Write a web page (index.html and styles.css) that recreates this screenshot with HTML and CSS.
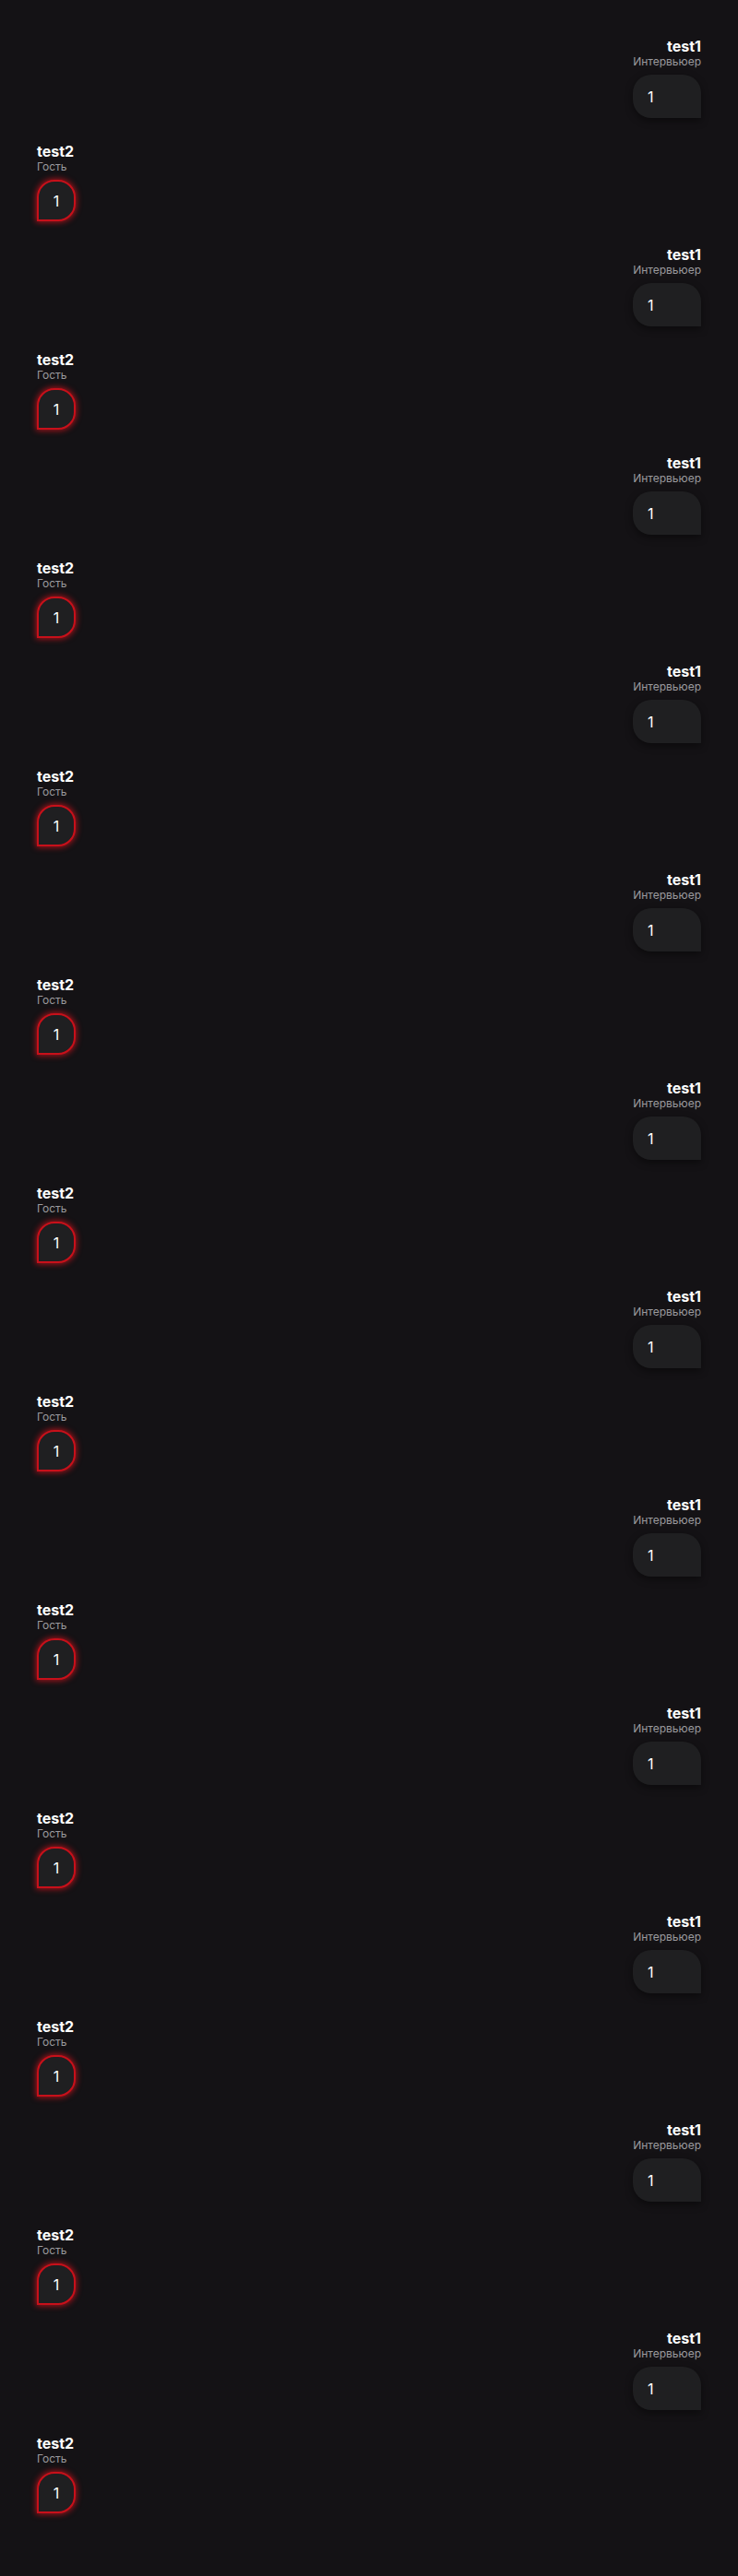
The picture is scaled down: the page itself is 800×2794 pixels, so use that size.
FILE: index.html
```html
<!DOCTYPE html>
<html lang="ru">
<head>
  <meta charset="UTF-8" />
  <meta name="viewport" content="width=device-width, initial-scale=1.0"/>
  <title>Chat</title>
  <link rel="stylesheet" href="styles.css">
</head>
<body>
  <div class="chat" id="chat"></div>

  <script>
    const chat = document.getElementById("chat");

    // 12 pairs of messages: interviewer on the right, guest on the left
    for (let i = 0; i < 12; i++) {
      chat.innerHTML += `
        <div class="message own">
          <div class="name">test1</div>
          <div class="role">Интервьюер</div>
          <div class="bubble">1</div>
        </div>
        <div class="message guest">
          <div class="name">test2</div>
          <div class="role">Гость</div>
          <div class="bubble">1</div>
        </div>
      `;
    }
  </script>
</body>
</html>
```

FILE: styles.css
```css
body {
  font-family: Inter, "Noto Sans", sans-serif;
  background: #141215;
  color: #fff;
  margin: 0;
  padding: 0;
}

.chat {
  padding: 41px 40px 40px;
  display: flex;
  flex-direction: column;
}

.message {
  display: flex;
  flex-direction: column;
  align-items: flex-start;
  margin-bottom: 27px;
}

.message.own {
  align-items: flex-end;
}

.name {
  font-size: 16px;
  font-weight: 700;
  line-height: 18px;
}

.role {
  font-size: 12px;
  line-height: 16px;
  color: #9b9a9e;
}

.bubble {
  margin-top: 6px;
  background: #1f1f21;
  font-size: 16px;
  line-height: 24px;
  box-sizing: border-box;
}

.own .bubble {
  min-width: 74px;
  height: 47px;
  padding: 11.5px 16px;
  border-radius: 20px 20px 0 20px;
  box-shadow: 0 3px 8px rgba(0, 0, 0, 0.45);
}

.guest .bubble {
  min-width: 42px;
  height: 45px;
  padding: 8.5px 0;
  text-align: center;
  border: 2px solid #c8101a;
  border-radius: 19px 19px 19px 0;
  box-shadow: 0 0 6px 1px rgba(220, 20, 30, 0.75);
}
```
